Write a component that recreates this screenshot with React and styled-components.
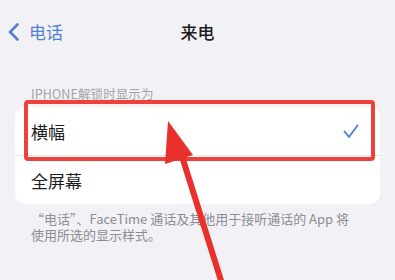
import React from "react";
import styled, { createGlobalStyle } from "styled-components";

const Global = createGlobalStyle`
  html, body { margin: 0; padding: 0; }
  body {
    background: #f2f2f6;
    font-family: "Noto Sans CJK SC", "Noto Sans", "Liberation Sans", sans-serif;
    -webkit-font-smoothing: antialiased;
  }
`;

const Page = styled.div`
  position: relative;
  width: 395px;
  height: 280px;
  overflow: hidden;
  background: #f2f2f6;
`;

const Nav = styled.div`
  display: grid;
  grid-template-columns: 1fr auto 1fr;
  align-items: center;
  height: 24px;
  padding: 20px 0 0 0;
`;

const Back = styled.div`
  display: flex;
  align-items: center;
  gap: 10px;
  padding-left: 8px;
  color: #4f80d6;
  font-size: 17px;
  line-height: 24px;
`;

const Title = styled.div`
  font-size: 17px;
  font-weight: 500;
  color: #1c1c1e;
  line-height: 24px;
`;

const SectionHeader = styled.div`
  margin: 42px 0 0 31px;
  font-size: 12.5px;
  line-height: 16px;
  color: #a3a3a8;
  letter-spacing: 0.1px;
`;

const Card = styled.div`
  position: relative;
  margin: 5px 15px 0 15px;
  background: #ffffff;
  border-radius: 10px;
`;

const Row = styled.div`
  display: flex;
  align-items: center;
  justify-content: space-between;
  height: 48px;
  padding: 0 21px 0 16px;
  font-size: 17px;
  color: #1c1c1e;
  border-top: ${(p) => (p.$first ? "none" : "0.5px solid #e6e6ea")};
`;

const Highlight = styled.div`
  position: absolute;
  left: 9px;
  top: -7px;
  width: 343px;
  height: 53px;
  border: 4px solid #f0403a;
  border-radius: 4px;
  pointer-events: none;
`;

const Footer = styled.div`
  display: flex;
  flex-direction: column;
  margin: 7px 20px 0 31px;
  font-size: 13px;
  color: #8c8c91;
`;

const FooterLine = styled.div`
  height: 16px;
  line-height: 16px;
  white-space: nowrap;
`;

const Overlay = styled.svg`
  position: absolute;
  left: 0;
  top: 0;
  pointer-events: none;
`;

export default function App() {
  return (
    <Page>
      <Global />
      <Nav>
        <Back>
          <svg width="11" height="18" viewBox="0 0 11 18">
            <path d="M9.5 1.5 L2 9 L9.5 16.5" fill="none" stroke="#4f80d6" strokeWidth="2.6" strokeLinecap="round" strokeLinejoin="round" />
          </svg>
          <span>电话</span>
        </Back>
        <Title>来电</Title>
        <div />
      </Nav>
      <SectionHeader>IPHONE解锁时显示为</SectionHeader>
      <Card>
        <Row $first>
          <span>横幅</span>
          <svg width="16" height="15" viewBox="0 0 16 15">
            <path d="M1.5 7.5 L6 13 L14.5 1.5" fill="none" stroke="#4f80d6" strokeWidth="1.9" strokeLinecap="round" strokeLinejoin="round" />
          </svg>
        </Row>
        <Row>
          <span>全屏幕</span>
        </Row>
        <Highlight />
      </Card>
      <Footer>
        <FooterLine>“电话”、FaceTime 通话及其他用于接听通话的 App 将</FooterLine>
        <FooterLine>使用所选的显示样式。</FooterLine>
      </Footer>
      <Overlay width="395" height="280" viewBox="0 0 395 280">
        <line x1="180" y1="150" x2="224" y2="290" stroke="#e8302c" strokeWidth="6" />
        <polygon points="168,121 165,164 193,155" fill="#e8302c" />
      </Overlay>
    </Page>
  );
}
